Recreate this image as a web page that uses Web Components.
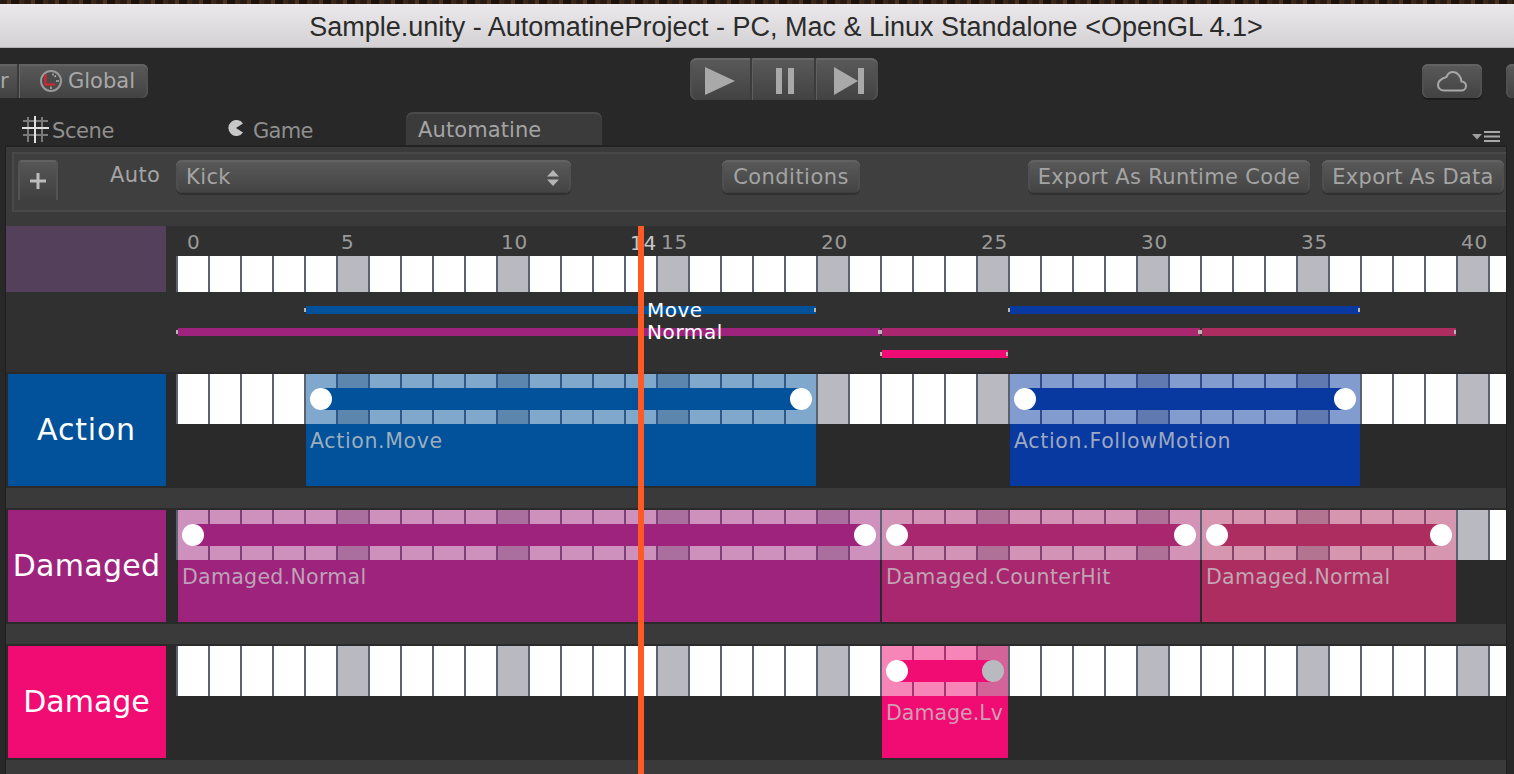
<!DOCTYPE html>
<html><head><meta charset="utf-8"><title>Automatine</title>
<style>
html,body{margin:0;padding:0;background:#282828;width:1514px;height:774px;overflow:hidden;font-family:"DejaVu Sans",sans-serif}
</style></head><body>
<x-app></x-app>
<script>
const def=(name,css,html,init)=>{customElements.define(name,class extends HTMLElement{
  connectedCallback(){ if(this.shadowRoot) return; const r=this.attachShadow({mode:'open'});
    r.innerHTML=`<style>${css}</style>`+(typeof html==='function'?html(this):html); if(init) init(this,r);} });};

def('x-titlebar',`:host{display:block}
 .desk{height:4px;background:repeating-linear-gradient(90deg,#2a1c12 0 7px,#4a3423 7px 11px,#1c120b 11px 19px,#3a2818 19px 24px)}
 .bar{height:43px;box-sizing:border-box;background:linear-gradient(#ebe9eb,#d3d1d3);display:flex;align-items:center;justify-content:center;font:27px/1 "Liberation Sans",sans-serif;color:#2b2b2b;padding:3px 0 0 58px}
 .rule{height:1px;background:#b0b0b0}`,
 `<div class="desk"></div><div class="bar"><slot></slot></div><div class="rule"></div>`);

def('x-btn',`:host{display:inline-flex;align-items:center;box-sizing:border-box;height:33px;padding:2px 10px 0;border-radius:6px;background:linear-gradient(#5a5a5a,#434343);box-shadow:inset 0 2px 0 #626262,inset 0 -1px 0 #3e3e3e,inset 2px 0 0 #505050,inset -2px 0 0 #505050,0 2px 0 rgba(0,0,0,.22);color:#a4a4a4;font:21px/1 "DejaVu Sans",sans-serif;white-space:nowrap}`,
 `<slot></slot>`);

def('x-toolbar',`:host{display:flex;height:64px;box-sizing:border-box;background:#282828;color:#a8a8a8;font:21px/1 "DejaVu Sans",sans-serif}
 .left{width:148px;margin-top:16px;height:34px;display:flex;overflow:hidden}
 .seg{display:flex;align-items:center;height:34px;box-sizing:border-box;background:linear-gradient(#5a5a5a,#424242);box-shadow:inset 0 2px 0 #626262}
 .seg.r{width:19px;justify-content:flex-start;border-right:2px solid #3a3a3a}
 .seg.g{flex:1;border-radius:0 6px 6px 0;padding-left:19px;gap:5px;border-left:1px solid #666;box-shadow:inset 0 2px 0 #626262,inset -2px 0 0 #505050}
 .play{margin-left:542px;margin-top:10px;width:188px;height:42px;display:flex;border-radius:7px;overflow:hidden;background:linear-gradient(#5a5a5a,#424242);box-shadow:inset 0 2px 0 #666,inset 2px 0 0 #505050,inset -2px 0 0 #505050}
 .play div{display:flex;align-items:center;justify-content:center;box-sizing:border-box;padding-top:4px}
 .play .a{width:62px;border-right:2px solid #3c3c3c}
 .play .b{width:64px;border-right:2px solid #3c3c3c;box-shadow:inset 1px 0 0 #5f5f5f;padding-left:3px}
 .play .c{width:62px;box-shadow:inset 1px 0 0 #5f5f5f;padding-left:4px}
 .cloud{margin-left:544px;margin-top:16px;width:60px;height:34px;display:flex;align-items:center;justify-content:center;border-radius:6px;background:linear-gradient(#5a5a5a,#424242);box-shadow:inset 0 2px 0 #626262,inset 2px 0 0 #505050,inset -2px 0 0 #505050,0 2px 0 rgba(0,0,0,.3)}
 .next{margin-left:24px;margin-top:16px;flex:1;height:34px;border-radius:6px 0 0 6px;background:linear-gradient(#5a5a5a,#424242);box-shadow:inset 0 2px 0 #626262,inset 2px 0 0 #505050}`,
 `<div class="left"><div class="seg r">r</div><div class="seg g">
   <svg width="24" height="24" viewBox="0 0 24 24"><circle cx="12" cy="12" r="10" fill="#4a4a4a" stroke="#9a9a9a" stroke-width="2"/><path d="M14 4.500v2M17 6.500l-1.500 1.500M20 12h-3M12 20v-2.500" stroke="#b0b0b0" stroke-width="1.500"/><path d="M6.500 5.500v10h9.500" fill="none" stroke="#e0222e" stroke-width="2.200"/></svg>Global</div></div>
  <div class="play">
   <div class="a"><svg width="30" height="28" viewBox="0 0 30 28"><path d="M0 0L30 14L0 28Z" fill="#a9a9a9"/></svg></div>
   <div class="b"><svg width="18" height="26" viewBox="0 0 18 26"><path d="M0 0h6v26H0zM12 0h6v26h-6z" fill="#a9a9a9"/></svg></div>
   <div class="c"><svg width="30" height="28" viewBox="0 0 30 28"><path d="M0 0L24 14L0 28Z M24 1h6v26h-6z" fill="#a9a9a9"/></svg></div>
  </div>
  <div class="cloud"><svg width="30" height="21" viewBox="0 0 30 21"><path d="M7 19.500h17c3 0 5-2 5-4.500s-2-4.500-4.500-4.500C24 5.500 20.500 1 16 1c-3.500 0-5.500 2-6.500 5C4.500 7.500 1 10.500 1 14c0 3 2.500 5.500 6 5.500z" fill="none" stroke="#a8a8a8" stroke-width="2"/></svg></div>
  <div class="next"></div>`);

def('x-tabs',`:host{display:flex;height:33px;background:#282828;color:#8f8f8f;font:21px/1 "DejaVu Sans",sans-serif;position:relative}
 .t{display:flex;align-items:center;box-sizing:border-box;height:33px}
 .scene{margin-left:22px;width:204px;gap:3px;padding-top:6px;letter-spacing:-.4px}
 .game{width:180px;gap:9px;padding-top:6px;letter-spacing:-.7px}
 .auto{width:196px;background:#3b3b3b;border-radius:7px 7px 0 0;box-shadow:inset 0 2px 0 #4a4a4a;padding-left:12px;color:#a4a4a4;padding-top:4px;letter-spacing:.1px}
 .menu{margin-left:auto;margin-right:14px;align-self:flex-end;display:flex;margin-bottom:3px}`,
 `<div class="t scene"><svg width="27" height="27" viewBox="0 0 27 27" style="margin-top:-5px"><path d="M6 1v25M20 1v25M1 5h25M1 19h25" stroke="#7a7a7a" stroke-width="2"/><path d="M13 0v27M0 12h27" stroke="#e0e0e0" stroke-width="2"/></svg><span>Scene</span></div>
  <div class="t game"><svg width="18" height="16" viewBox="0 0 18 16" style="margin-top:-8px"><path d="M17 3.500A8 8 0 1 0 17 12.500L10 8Z" fill="#c8c8c8"/></svg><span>Game</span></div>
  <div class="t auto"><span>Automatine</span></div>
  <div class="menu"><svg width="28" height="11" viewBox="0 0 28 11"><path d="M0 3h10L5 8.500Z" fill="#a0a0a0"/><path d="M12 0h16v2H12zM12 4.500h16v2H12zM12 9h16v2H12z" fill="#a8a8a8"/></svg></div>`);

def('x-panel',`:host{display:block;margin-left:5px;width:1502px;height:629px;box-sizing:border-box;background:#3a3a3a;border-top:2px solid #222;border-left:1px solid #1f1f1f;border-right:1px solid #1f1f1f}`,`<slot></slot>`);

def('x-auto-bar',`:host{display:flex;align-items:flex-start;box-sizing:border-box;height:60px;margin:5px 0 14px 6px;background:#3f3f3f;border:2px solid #494949;border-right:0;padding:6px 0 0 4px;color:#a4a4a4;font:21px/1 "DejaVu Sans",sans-serif}
 .plus{width:40px;height:40px;box-sizing:border-box;display:flex;align-items:center;justify-content:center;background:linear-gradient(#565656,#3f3f3f);border-top:2px solid #626262;border-left:2px solid #545454;border-right:2px solid #545454;border-radius:4px 4px 0 0}
 .auto{margin-left:52px;margin-top:5px;letter-spacing:.4px;width:66px;display:block}
 .sel{width:395px;justify-content:space-between;padding-right:12px}
 .cond{margin-left:151px;width:138px;letter-spacing:.45px;justify-content:center;padding-left:0;padding-right:0}
 .e1{margin-left:168px;width:282px;letter-spacing:.32px;justify-content:center;padding-left:0;padding-right:0}
 .e2{margin-left:12px;width:182px;letter-spacing:.27px;justify-content:center;padding-left:0;padding-right:0}`,
 `<div class="plus"><svg width="16" height="16" viewBox="0 0 16 16"><path d="M6.500 0h3v6.500H16v3H9.500V16h-3V9.500H0v-3h6.500z" fill="#bcbcbc"/></svg></div>
  <span class="auto">Auto</span>
  <x-btn class="sel"><span style="letter-spacing:.4px">Kick</span><svg width="12" height="16" viewBox="0 0 12 16"><path d="M6 0L12 6.500H0ZM6 16L12 9.500H0Z" fill="#b4b4b4"/></svg></x-btn>
  <x-btn class="cond">Conditions</x-btn><x-btn class="e1">Export As Runtime Code</x-btn><x-btn class="e2">Export As Data</x-btn>`);

// a run of frame cells; every fifth frame is grey
const cellsHTML=h=>{let s='';for(let i=0;i<42;i++)s+=`<i class="${i&&i%5==0?'g':''}"></i>`;return `<div class="cells" style="height:${h}px">${s}</div>`};
const cellsCSS=`.cells{display:flex;width:1330px;overflow:hidden}
 .cells i{flex:0 0 32px;box-sizing:border-box;background:#fff;border-left:2px solid #5a6170}
 .cells i.g{background:#b9bac0}`;

def('x-overview',`:host{display:flex;height:146px;background:#303030;position:relative}
 .swatch{width:160px;height:66px;background:#55405c;flex:none}
 .main{margin-left:10px;width:1330px;overflow:hidden}
 .nums{display:flex;height:30px;color:#9a9a9a;font:20px/32px "DejaVu Sans",sans-serif;letter-spacing:.7px}
 .nums span{flex:0 0 160px;box-sizing:border-box;padding-left:5px}
 .nums span:first-child{padding-left:11px}
 .lanes{margin-top:14px;display:flex;flex-direction:column;gap:14px}
 ${cellsCSS}`,
 `<div class="swatch"></div><div class="main"><div class="nums">${[0,5,10,15,20,25,30,35,40].map(n=>`<span>${n}</span>`).join('')}</div>${cellsHTML(36)}<div class="lanes"><slot></slot></div></div>`);

def('x-lane',`:host{display:block;height:8px;position:relative}`,`<slot></slot>`);

def('x-span',`:host{position:absolute;top:0;height:8px;box-sizing:border-box;left:calc(var(--s)*32px + 2px);width:calc((var(--e) - var(--s))*32px - 2px);background:var(--c)}
 :host::before,:host::after{content:"";position:absolute;top:2px;width:2px;height:4px;background:#b8b8b8}
 :host::before{left:-2px}:host::after{right:0}`,`<slot></slot>`,
 (el)=>{el.style.setProperty('--s',el.getAttribute('s'));el.style.setProperty('--e',el.getAttribute('e'));el.style.setProperty('--c',el.getAttribute('c'));});

def('x-row',`:host{display:flex;box-sizing:border-box;height:116px;margin-bottom:20px;padding:2px 0 2px 2px;background:#2a2a2a}
 .name{flex:0 0 158px;display:flex;align-items:center;justify-content:center;color:#fff;font:30px/1 "DejaVu Sans",sans-serif;padding:0 1px 1px 0;box-sizing:border-box}
 .track{margin-left:10px;width:1330px;height:112px;position:relative;overflow:hidden}
 ${cellsCSS}`,
 el=>`<div class="name" style="background:${el.getAttribute('c')};letter-spacing:${el.getAttribute('ls')}px">${el.getAttribute('name')}</div><div class="track">${cellsHTML(50)}<slot></slot></div>`);

def('x-clip',`:host{position:absolute;top:0;left:calc(var(--s)*32px + 2px);width:calc((var(--e) - var(--s))*32px - 2px);height:112px;display:grid;grid-template-rows:14px 22px 14px 1fr}
 .tint{background:color-mix(in srgb,var(--c) 50%,transparent)}
 .bar{display:flex;justify-content:space-between;padding:0 4px;background:linear-gradient(var(--c),var(--c)) center/calc(100% - 30px) 100% no-repeat,color-mix(in srgb,var(--c) 50%,transparent)}
 .bar b{width:22px;height:22px;border-radius:50%;background:#fff}
 .bar b.off{background:#b9bac0}
 .body{background:var(--c);color:rgba(200,200,200,.78);font:20.500px/1 "DejaVu Sans",sans-serif;padding:7px 0 0 4px;white-space:nowrap;overflow:hidden}`,
 el=>`<div class="tint"></div><div class="bar"><b></b><b class="${el.hasAttribute('off')?'off':''}"></b></div><div class="tint"></div><div class="body" style="letter-spacing:${el.getAttribute('ls')}px">${el.getAttribute('label')}</div>`,
 el=>{el.style.setProperty('--s',el.getAttribute('s'));el.style.setProperty('--e',el.getAttribute('e'));el.style.setProperty('--c',el.getAttribute('c'));});

def('x-playhead',`:host{position:absolute;left:638px;top:226px;bottom:0;width:120px;color:#fff;font:20px/1 "DejaVu Sans",sans-serif;pointer-events:none}
 .line{position:absolute;left:0;top:0;bottom:0;width:6px;background:#ff5a23}
 .n{position:absolute;left:-8px;top:7px;letter-spacing:.7px;color:#c8c8c8}
 .m{position:absolute;left:9px;top:74px;letter-spacing:.5px}
 .o{position:absolute;left:9px;top:96px;letter-spacing:.6px}`,
 `<div class="n">14</div><div class="m">Move</div><div class="o">Normal</div><div class="line"></div>`);

const BLUE='#01529b',NAVY='#0839a1',PURP='#9e237d',MAG='#a8276f',ROSE='#ae2d61',PINK='#f00c72';
customElements.define('x-app',class extends HTMLElement{connectedCallback(){ if(this.shadowRoot) return;
 const r=this.attachShadow({mode:'open'});
 r.innerHTML=`<style>:host{display:block;width:1514px;height:774px;background:#282828;position:relative;overflow:hidden}</style>
 <x-titlebar>Sample.unity - AutomatineProject - PC, Mac &amp; Linux Standalone &lt;OpenGL 4.1&gt;</x-titlebar>
 <x-toolbar></x-toolbar><x-tabs></x-tabs>
 <x-panel>
  <x-auto-bar></x-auto-bar>
  <x-overview>
   <x-lane><x-span s="4" e="20" c="${BLUE}"></x-span><x-span s="26" e="37" c="${NAVY}"></x-span></x-lane>
   <x-lane><x-span s="0" e="22" c="${PURP}"></x-span><x-span s="22" e="32" c="${MAG}"></x-span><x-span s="32" e="40" c="${ROSE}"></x-span></x-lane>
   <x-lane><x-span s="22" e="26" c="${PINK}"></x-span></x-lane>
  </x-overview>
  <x-row name="Action" ls=".8" c="${BLUE}"><x-clip s="4" e="20" ls=".65" c="${BLUE}" label="Action.Move"></x-clip><x-clip s="26" e="37" ls=".67" c="${NAVY}" label="Action.FollowMotion"></x-clip></x-row>
  <x-row name="Damaged" ls=".3" c="${PURP}"><x-clip s="0" e="22" ls=".3" c="${PURP}" label="Damaged.Normal"></x-clip><x-clip s="22" e="32" ls=".42" c="${MAG}" label="Damaged.CounterHit"></x-clip><x-clip s="32" e="40" ls=".3" c="${ROSE}" label="Damaged.Normal"></x-clip></x-row>
  <x-row name="Damage" ls="0" c="${PINK}"><x-clip s="22" e="26" ls=".03" c="${PINK}" label="Damage.Lv" off></x-clip></x-row>
 </x-panel>
 <x-playhead></x-playhead>`;
}});
</script>
</body></html>
